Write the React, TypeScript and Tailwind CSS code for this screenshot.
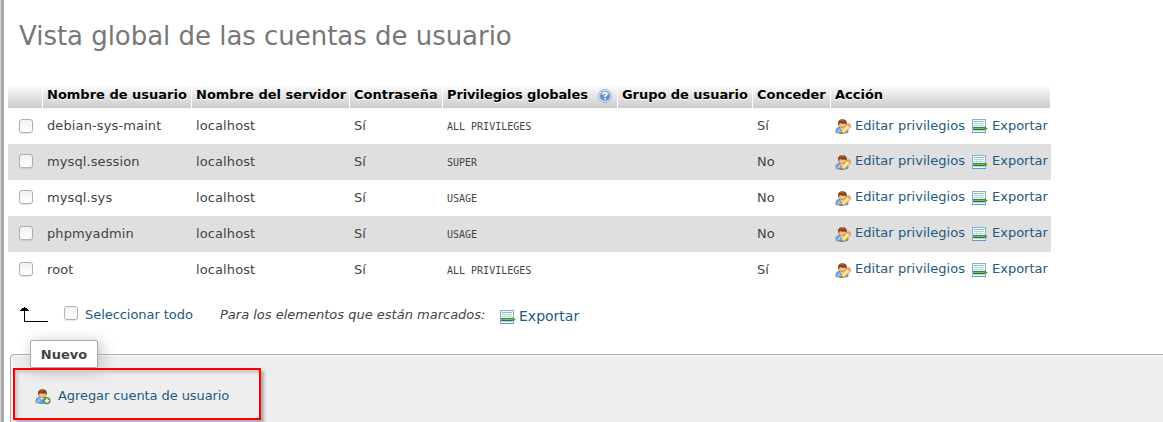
import React from "react";

const columns = "grid grid-cols-[35px_149px_158px_93px_175px_135px_78px_220px]";

const users = [
  { name: "debian-sys-maint", privileges: "ALL PRIVILEGES", grant: "Sí" },
  { name: "mysql.session", privileges: "SUPER", grant: "No" },
  { name: "mysql.sys", privileges: "USAGE", grant: "No" },
  { name: "phpmyadmin", privileges: "USAGE", grant: "No" },
  { name: "root", privileges: "ALL PRIVILEGES", grant: "Sí" },
];

function Person() {
  return (
    <>
      <path d="M.8 13.5V12Q1 8.4 5 8.2H9Q13 8.4 13 12V13.5Q7 15.5 .8 13.5Z" fill="#5a9eee" stroke="#4a80c8" strokeWidth=".7" />
      <path d="M2 12Q3 9.5 5 9.5L6 13H3Z" fill="#8fc4fa" />
      <path d="M5 8.3L7 11L9 8.3Z" fill="#fff" />
      <path d="M0.6 12.5h2.2v2H.6z" fill="#e8aa70" />
      <ellipse cx="7.5" cy="5.2" rx="3.9" ry="3.5" fill="#f3bd84" stroke="#a96934" strokeWidth=".6" />
      <path d="M3 5.2Q2.6 .3 7.4 .3Q12.4 .3 12 5.5L10.8 4.4Q7 5 4.8 4L3.8 6Z" fill="#87451d" />
      <path d="M5 2Q7 1 9.5 2" fill="none" stroke="#a8623a" />
    </>
  );
}

function EditIcon() {
  return (
    <svg className="block size-4 shrink-0" viewBox="0 0 16 16">
      <Person />
      <path d="M5.4 14.6L6.8 10.8L12.2 5.4L15.6 8L9.8 13.8Z" fill="#ffd76c" stroke="#d39338" strokeWidth=".8" />
      <path d="M8 12.1L13.2 7" stroke="#fff0a8" strokeWidth="1.3" />
      <path d="M12.2 5.4L13.5 4.2L16 6.3L15.2 7.8Z" fill="#f0b080" stroke="#c27848" strokeWidth=".5" />
      <path d="M5.4 14.8L6.2 12.6L7.7 14.2Z" fill="#7a5634" />
    </svg>
  );
}

function AddIcon() {
  return (
    <svg className="block size-4 shrink-0" viewBox="0 0 16 16">
      <Person />
      <circle cx="12" cy="11.7" r="3.3" fill="#74ab50" stroke="#4a8738" strokeWidth=".8" />
      <path d="M12 9.6V13.8M9.9 11.7H14.1" stroke="#fff" strokeWidth="1.4" />
    </svg>
  );
}

function ExportIcon() {
  return (
    <svg className="block size-4 shrink-0" viewBox="0 0 16 16">
      <rect x=".5" y=".5" width="13" height="13" fill="#f4f9ff" stroke="#86abe0" />
      <path d="M0 13.5H14" stroke="#6a93d2" />
      <path d="M2 2.5H12" stroke="#85cf80" />
      <path d="M2 4.5H12M2 6.5H12M2 11.5H12" stroke="#b4cbec" />
      <path d="M4.5 4V8M8.5 4V8" stroke="#c7d9f0" />
      <path d="M1 8.5H13" stroke="#3c8a36" />
      <path d="M1 9.5H15" stroke="#79bd66" />
      <path d="M1 10.5H13" stroke="#2c7a28" />
      <path d="M12.5 7.2L15.8 9.5L12.5 11.8Z" fill="#4a9a42" />
    </svg>
  );
}

function HelpIcon() {
  return (
    <svg className="block size-4" viewBox="0 0 16 16">
      <circle cx="8" cy="8" r="6.6" fill="#d2e3f6" stroke="#8aacd8" strokeWidth=".8" />
      <circle cx="8" cy="8" r="5.1" fill="#6391c8" />
      <path d="M3.8 7Q4 2.9 8 2.9Q12 2.9 12.2 7Q8 8.5 3.8 7Z" fill="#82aadb" />
      <path d="M6 6.3Q6 4.7 8 4.7Q10 4.7 10 6.1Q10 7.2 8 8.2V9.2" fill="none" stroke="#fff" strokeWidth="1.5" />
      <path d="M7.2 10.2h1.6v1.5H7.2z" fill="#fff" />
    </svg>
  );
}

function Check() {
  return (
    <input
      type="checkbox"
      className="m-0 block size-[14px] shrink-0 appearance-none rounded-[3px] border border-[#b0b0b0] bg-linear-to-b from-[#f2f2f2] to-white shadow-[0_1px_1px_#00000018]"
    />
  );
}

function HeadCell({ children }: { children?: React.ReactNode }) {
  return (
    <div className="mr-px flex bg-linear-to-b from-white to-[#cccccc] pl-1">
      {children}
    </div>
  );
}

export default function App() {
  return (
    <div className="flex h-[422px] w-[1163px] overflow-hidden bg-white font-['DejaVu_Sans',sans-serif] text-[13px] leading-4 text-[#444444]">
      <div className="w-1 shrink-0 border-l border-[#d4d4d4] bg-[#aaaaaa]" />
      <main className="flex min-w-0 flex-1 flex-col">
        <h1 className="h-[84px] shrink-0 pt-5 pl-[15px] text-[26px] leading-8 tracking-[-0.03px] whitespace-nowrap text-[#777777]">
          Vista global de las cuentas de usuario
        </h1>
        <section className="ml-1 w-[1043px] shrink-0 whitespace-nowrap">
          <div className={`${columns} h-6 leading-[22px] font-bold text-black [text-shadow:0_1px_0_#fff]`}>
            <HeadCell />
            <HeadCell>Nombre de usuario</HeadCell>
            <HeadCell>Nombre del servidor</HeadCell>
            <HeadCell>Contraseña</HeadCell>
            <HeadCell>
              <span className="w-[150px] tracking-[-0.13px]">Privilegios globales</span>
              <span className="mt-1"><HelpIcon /></span>
            </HeadCell>
            <HeadCell><span className="tracking-[-0.05px]">Grupo de usuario</span></HeadCell>
            <HeadCell>Conceder</HeadCell>
            <HeadCell>Acción</HeadCell>
          </div>
          {users.map((user, index) => (
            <div key={user.name} className={`${columns} h-9 items-start pt-[10px] ${index % 2 ? "bg-[#dfdfdf]" : ""}`}>
              <span className={index ? "pl-[11px]" : "pt-px pl-[11px]"}><Check /></span>
              <span className={index ? "pl-1 tracking-[0.1px]" : "pl-1 tracking-[0.12px]"}>{user.name}</span>
              <span className="pl-1 tracking-[0.1px]">localhost</span>
              <span className="pl-1">Sí</span>
              <span className="pl-1 font-['DejaVu_Sans_Mono',monospace] text-[10px] leading-[17px]">{user.privileges}</span>
              <span />
              <span className="pl-1">{user.grant}</span>
              <span className="flex pl-1 text-[#235a81]">
                <span className="pt-px"><EditIcon /></span>
                <span className={index ? "-mt-px ml-1 w-[117px] tracking-[0.04px]" : "ml-1 w-[117px] tracking-[0.04px]"}>Editar privilegios</span>
                <span className="pt-px"><ExportIcon /></span>
                <span className={index ? "-mt-px ml-1" : "ml-1"}>Exportar</span>
              </span>
            </div>
          ))}
        </section>
        <div className="flex h-[66px] shrink-0 items-start whitespace-nowrap">
          <svg className="mt-[18px] ml-4 h-5 w-7 shrink-0" viewBox="0 0 28 20" shapeRendering="crispEdges">
            <path d="M4 1h1v1h2v1h1v1h1v1H5v10h23v1H4V5H0V4h1V3h1V2h2z" fill="#000" />
          </svg>
          <span className="mt-[18px] ml-4"><Check /></span>
          <span className="mt-[19px] ml-[7px] w-[135px] tracking-[-0.05px] text-[#235a81]">Seleccionar todo</span>
          <em className="mt-[19px] w-[280px]">Para los elementos que están marcados:</em>
          <span className="mt-[22px]"><ExportIcon /></span>
          <span className="mt-5 ml-[3px] text-[14px] text-[#235a81]">Exportar</span>
        </div>
        <fieldset className="relative ml-[6px] h-[80px] w-[1160px] shrink-0 rounded-tl-[4px] border border-[#aaaaaa] bg-[#eeeeee] shadow-[inset_1px_1px_2px_#fff]">
          <div className="absolute top-[-15px] left-[19px] h-7 w-[68px] rounded-[2px] border border-[#aaaaaa] bg-white text-center text-[13px] leading-[27px] font-bold shadow-[3px_3px_15px_#bbbbbb]">
            Nuevo
          </div>
          <div className="absolute top-[13px] left-[2px] flex h-[52px] w-[248px] items-start border-2 border-[#fa0000] pt-[18px] pl-5 text-[#235a81] shadow-[3px_3px_3px_#aaaaaa,inset_3px_3px_3px_#cccccc]">
            <span className="pt-px"><AddIcon /></span>
            <span className="ml-[7px] tracking-[-0.08px]">Agregar cuenta de usuario</span>
          </div>
        </fieldset>
      </main>
    </div>
  );
}
